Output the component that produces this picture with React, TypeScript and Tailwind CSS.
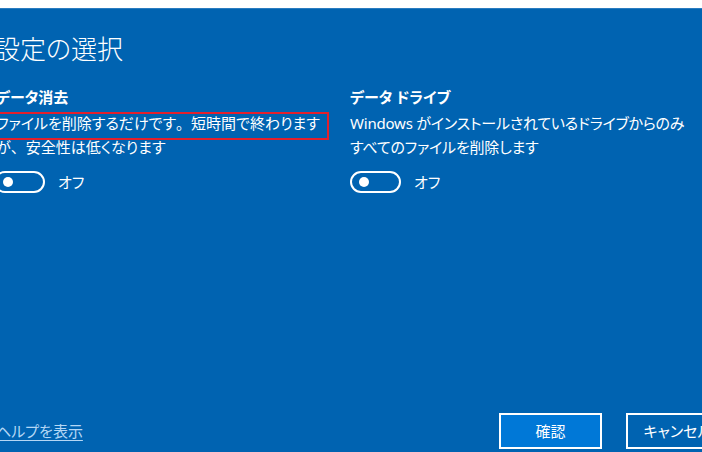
import React from "react";

function Toggle() {
  return (
    <div className="flex items-center gap-[13px]">
      <div className="w-[51px] h-[22px] rounded-full border-2 border-white flex items-center pl-[7px] shrink-0">
        <div className="w-[10px] h-[10px] rounded-full bg-white" />
      </div>
      <span className="text-[15px] leading-[22px]">オフ</span>
    </div>
  );
}

export default function App() {
  const font = "font-['Noto_Sans','Noto_Sans_CJK_JP',sans-serif] [font-feature-settings:'palt']";

  return (
    <div className={`relative w-[702px] h-[452px] overflow-hidden bg-white ${font}`}>
      {/* white strip above the dialog */}
      <div className="h-[8px] bg-white" />

      <div className="h-[444px] bg-[#0063b1] border-t border-[#2a7cc0] text-white flex flex-col">
        <div className="w-[733px] -ml-1 flex flex-col flex-1">
          <h1 className="pt-[23px] text-[26px] leading-[34px] font-light -ml-0.5">設定の選択</h1>

          <div className="mt-[20px] grid grid-cols-[354px_1fr]">
            <div>
              <h3 className="text-[15px] leading-[22px] font-bold">データ消去</h3>
              <p className="mt-[3px] text-[15px] leading-[24px]">
                ファイルを削除するだけです
                <span className="[font-feature-settings:normal]">。</span>
                短時間で終わります
                <br />
                が<span className="[font-feature-settings:normal]">、</span>安全性は低くなります
              </p>
              <div className="mt-[12px] -ml-0.5">
                <Toggle />
              </div>
            </div>
            <div>
              <h3 className="text-[15px] leading-[22px] font-bold">
                データ<span className="[font-feature-settings:normal]"> </span>ドライブ
              </h3>
              <p className="mt-[3px] text-[15px] leading-[24px] tracking-[-0.2px]">
                Windows がインストールされているドライブからのみ
                <br />
                すべてのファイルを削除します
              </p>
              <div className="mt-[12px]">
                <Toggle />
              </div>
            </div>
          </div>

          {/* footer */}
          <div className="mt-auto pb-[3px] flex items-center">
            <a className="text-[15px] text-[#b4d7f5] underline underline-offset-[3px] cursor-pointer">
              ヘルプを表示
            </a>
            <div className="ml-auto flex gap-[24px]">
              <button className="w-[103px] h-[36px] border-2 border-white bg-[#0078d7] text-[15px]">
                確認
              </button>
              <button className="w-[103px] h-[36px] border-2 border-white bg-[#0063b1] text-[15px]">
                キャンセル
              </button>
            </div>
          </div>
        </div>
      </div>

      {/* red annotation box */}
      <div className="absolute left-[-10px] top-[112px] w-[339px] h-[28px] border-2 border-[#e3202c]" />
    </div>
  );
}
